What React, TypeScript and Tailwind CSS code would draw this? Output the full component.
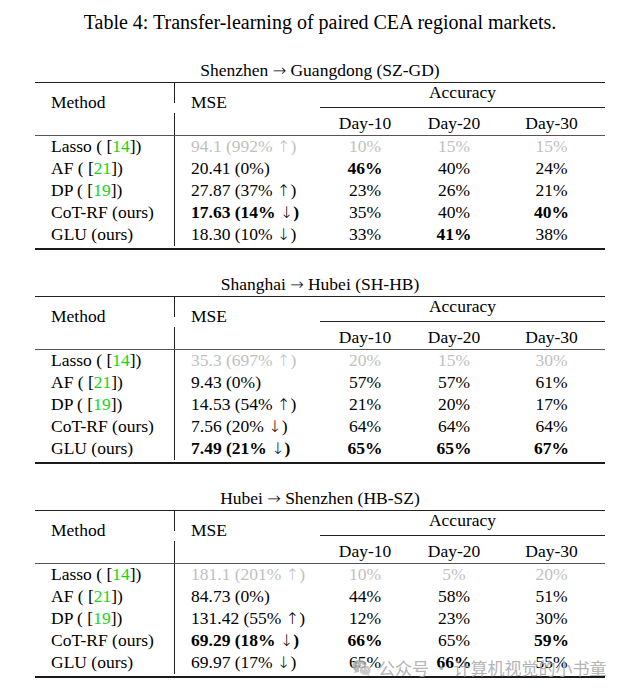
type Row = {
  method: string;
  cite?: string;
  mse: string;
  days: string[];
  grey?: boolean;
  mseBold?: boolean;
  bold?: number[];
};

type Block = {
  from: string;
  to: string;
  rows: Row[];
};

const blocks: Block[] = [
  {
    from: 'Shenzhen',
    to: 'Guangdong (SZ-GD)',
    rows: [
      { method: 'Lasso', cite: '14', mse: '94.1 (992% ↑)', days: ['10%', '15%', '15%'], grey: true },
      { method: 'AF', cite: '21', mse: '20.41 (0%)', days: ['46%', '40%', '24%'], bold: [0] },
      { method: 'DP', cite: '19', mse: '27.87 (37% ↑)', days: ['23%', '26%', '21%'] },
      { method: 'CoT-RF (ours)', mse: '17.63 (14% ↓)', days: ['35%', '40%', '40%'], mseBold: true, bold: [2] },
      { method: 'GLU (ours)', mse: '18.30 (10% ↓)', days: ['33%', '41%', '38%'], bold: [1] },
    ],
  },
  {
    from: 'Shanghai',
    to: 'Hubei (SH-HB)',
    rows: [
      { method: 'Lasso', cite: '14', mse: '35.3 (697% ↑)', days: ['20%', '15%', '30%'], grey: true },
      { method: 'AF', cite: '21', mse: '9.43 (0%)', days: ['57%', '57%', '61%'] },
      { method: 'DP', cite: '19', mse: '14.53 (54% ↑)', days: ['21%', '20%', '17%'] },
      { method: 'CoT-RF (ours)', mse: '7.56 (20% ↓)', days: ['64%', '64%', '64%'] },
      { method: 'GLU (ours)', mse: '7.49 (21% ↓)', days: ['65%', '65%', '67%'], mseBold: true, bold: [0, 1, 2] },
    ],
  },
  {
    from: 'Hubei',
    to: 'Shenzhen (HB-SZ)',
    rows: [
      { method: 'Lasso', cite: '14', mse: '181.1 (201% ↑)', days: ['10%', '5%', '20%'], grey: true },
      { method: 'AF', cite: '21', mse: '84.73 (0%)', days: ['44%', '58%', '51%'] },
      { method: 'DP', cite: '19', mse: '131.42 (55% ↑)', days: ['12%', '23%', '30%'] },
      { method: 'CoT-RF (ours)', mse: '69.29 (18% ↓)', days: ['66%', '65%', '59%'], mseBold: true, bold: [0, 2] },
      { method: 'GLU (ours)', mse: '69.97 (17% ↓)', days: ['65%', '66%', '55%'], bold: [1] },
    ],
  },
];

const cols = 'grid grid-cols-[140px_145px_90px_88px_107px]';

// math arrows are taller/thinner than the serif's own glyphs
function withArrows(s: string) {
  return s.split(/([↑↓→])/).map((part, i) =>
    /[↑↓→]/.test(part) ? (
      <span key={i} className="font-['DejaVu_Sans_ExtraLight','DejaVu_Sans',sans-serif] font-extralight text-[16px]">
        {part}
      </span>
    ) : (
      part
    ),
  );
}

function ResultTable({ block }: { block: Block }) {
  return (
    <div className="flex flex-col">
      <div className="h-[24px] leading-[24px] text-center whitespace-nowrap">
        {withArrows(`${block.from} → ${block.to}`)}
      </div>
      <div className="h-px bg-[#222]" />

      {/* header */}
      <div className={`${cols} grid-rows-[20px_4px_1px_5px_22px]`}>
        <div className="col-start-1 row-start-1 border-r border-[#222]" />
        <div className="col-start-1 row-start-5 border-r border-[#222]" />
        <div className="col-start-1 row-start-1 row-span-5 pl-4 pt-2 leading-[22px]">Method</div>
        <div className="col-start-2 row-start-1 row-span-5 pl-4 pt-2 leading-[22px]">MSE</div>
        <div className="col-start-3 col-span-3 row-start-1 row-span-2 text-center leading-[18px]">Accuracy</div>
        <div className="col-start-3 col-span-3 row-start-3 bg-[#222]" />
        {['Day-10', 'Day-20', 'Day-30'].map((d, i) => (
          <div
            key={d}
            className={`row-start-4 row-span-2 pt-1 text-center leading-[22px] ${
              i === 0 ? 'col-start-3' : i === 1 ? 'col-start-4' : 'col-start-5'
            }`}
          >
            {d}
          </div>
        ))}
      </div>
      <div className="h-px bg-[#555]" />

      {/* body */}
      {block.rows.map((r) => (
        <div key={r.method} className={`${cols} h-[22px] leading-[21px]`}>
          <div className="border-r border-[#222] pl-4 whitespace-nowrap">
            {r.cite ? (
              <>
                {r.method} ( [<span className="text-[#16d416]">{r.cite}</span>])
              </>
            ) : (
              r.method
            )}
          </div>
          <div
            className={`pl-4 whitespace-nowrap ${r.grey ? 'text-[#bfbfbf]' : ''} ${r.mseBold ? 'font-bold' : ''}`}
          >
            {withArrows(r.mse)}
          </div>
          {r.days.map((d, i) => (
            <div
              key={i}
              className={`text-center ${r.grey ? 'text-[#bfbfbf]' : ''} ${r.bold?.includes(i) ? 'font-bold' : ''}`}
            >
              {d}
            </div>
          ))}
        </div>
      ))}
      <div className="h-[2px]" />
      <div className="h-[2px] bg-[#1a1a1a]" />
    </div>
  );
}

function WeChatIcon() {
  return (
    <svg width="20" height="18" viewBox="0 0 20 18" fill="none">
      <ellipse cx="7.5" cy="7" rx="7.2" ry="6.2" fill="#a9a9a9" />
      <path d="M3 11.5 L2.2 14.5 L6 12.5 Z" fill="#a9a9a9" />
      <ellipse cx="13.2" cy="11.2" rx="6" ry="5.2" fill="#bdbdbd" stroke="#fff" strokeWidth="1" />
      <path d="M16.5 14.8 L17.6 17.2 L14.5 15.8 Z" fill="#bdbdbd" />
      <circle cx="5" cy="5.3" r="0.9" fill="#fff" />
      <circle cx="9.6" cy="5.3" r="0.9" fill="#fff" />
      <circle cx="11.4" cy="10" r="0.75" fill="#fff" />
      <circle cx="15" cy="10" r="0.75" fill="#fff" />
    </svg>
  );
}

export default function App() {
  return (
    <div
      className="relative w-[627px] h-[696px] overflow-hidden bg-white text-black text-[17.5px]"
      style={{ fontFamily: '"Liberation Serif", "Times New Roman", serif' }}
    >
      <div className="ml-[35px] w-[570px] flex flex-col">
        <div className="pt-[10px] h-[34px] text-[20px] leading-[24px] text-center whitespace-nowrap">
          Table 4: Transfer-learning of paired CEA regional markets.
        </div>
        <div className="mt-[24px] flex flex-col gap-[22px]">
          {blocks.map((b) => (
            <ResultTable key={b.from} block={b} />
          ))}
        </div>
      </div>

      <div className="absolute left-[352px] top-[658px] flex items-center gap-[6px] opacity-80">
        <WeChatIcon />
        <span
          className="text-[17px] leading-[20px] text-[#a3a3a3] whitespace-nowrap"
          style={{ fontFamily: '"Noto Sans CJK SC", "Noto Sans", sans-serif' }}
        >
          公众号 · 计算机视觉的小书童
        </span>
      </div>
    </div>
  );
}
